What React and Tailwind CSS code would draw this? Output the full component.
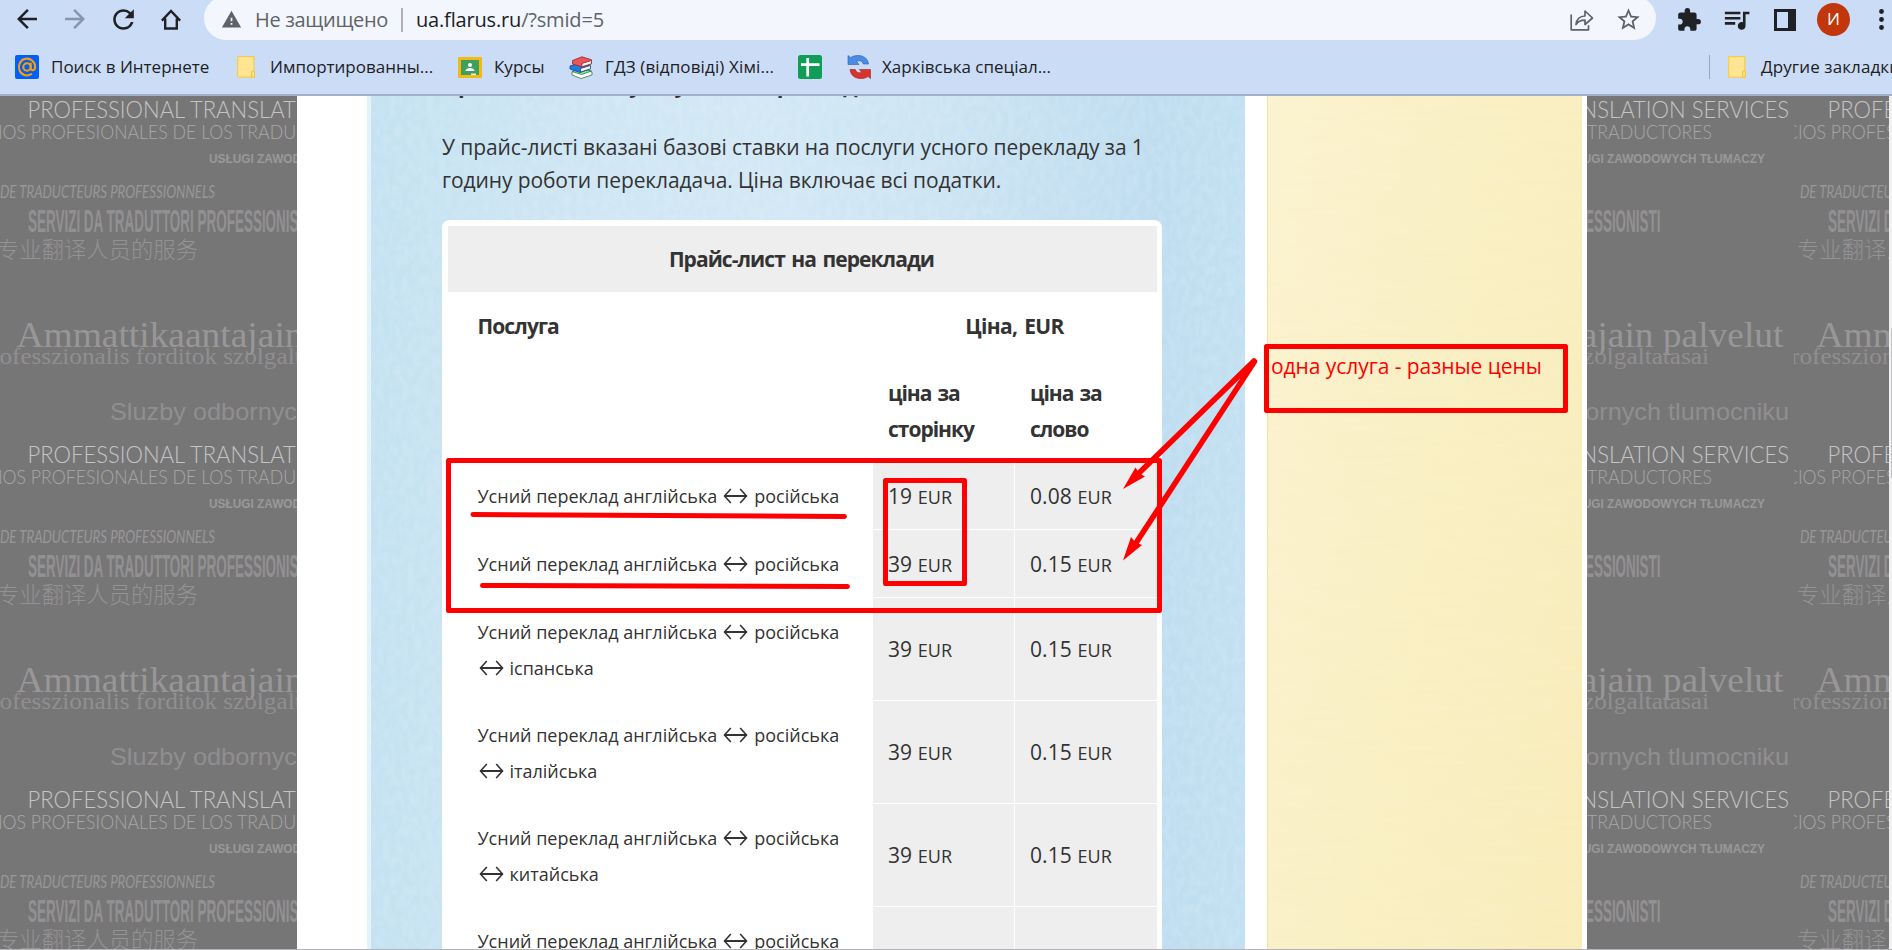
import React from 'react';
import { MdArrowBack, MdArrowForward, MdRefresh, MdWarning, MdStarBorder, MdExtension, MdQueueMusic } from 'react-icons/md';

const wallpaperLines = [
  { t: 'PROFESSIONAL TRANSLATION SERVICES', x: 27.5, w: 411.5, y: 118.3, s: 22.5, c: '#c6c3c6', f: 'Lato', b: 300 },
  { t: 'CIOS PROFESIONALES DE LOS TRADUCTORES', x: -14, w: 376, y: 139, s: 20.5, c: '#a9a6a9', f: 'Lato', b: 300 },
  { t: 'USŁUGI ZAWODOWYCH TŁUMACZY', x: 209, w: 206, y: 163.3, s: 13, c: '#9b989b', f: 'Liberation Sans', b: 700 },
  { t: 'DE TRADUCTEURS PROFESSIONNELS', x: 0, w: 215, y: 197.7, s: 17, c: '#9a979a', f: 'Lato', i: 'italic' },
  { t: 'SERVIZI DA TRADUTTORI PROFESSIONISTI', x: 28, w: 282.5, y: 232, s: 32, c: '#939093', f: 'Liberation Sans', b: 700 },
  { t: '专业翻译人员的服务', x: -3, w: 201, y: 258, s: 22.3, c: '#959295', f: 'Noto Sans CJK SC', b: 300 },
  { t: 'Ammattikaantajain palvelut', x: 16.5, w: 417, y: 346.5, s: 36, c: '#999699', f: 'Liberation Serif' },
  { t: 'rofesszionalis forditok szolgaltatasai', x: -9, w: 368, y: 364, s: 23, c: '#918e91', f: 'Liberation Serif' },
  { t: 'Sluzby odbornych tlumocniku', x: 110, w: 329, y: 420, s: 24.5, c: '#918e91', f: 'Liberation Sans' },
];

function Wallpaper({ x, width }) {
  const tiles = [];
  for (let r = 0; r < 3; r++) for (let k = 0; k < 5; k++) tiles.push([k * 450 - 6, 96 + r * 345]);
  return (
    <svg className="block h-full shrink-0 bg-[#767676]" width={width} height={853} viewBox={`${x} 96 ${width} 853`}>
      {tiles.filter(([tx]) => tx < x + width && tx + 450 > x).map(([tx, ty]) => (
        <svg key={`${tx}-${ty}`} x={tx} y={ty} width="450" height="345" viewBox="-6 96 450 345" overflow="hidden">
          {wallpaperLines.map((l) => (
            <text key={l.t} x={l.x} y={l.y} textLength={l.w} lengthAdjust="spacingAndGlyphs" fontSize={l.s}
              fill={l.c} fontFamily={`"${l.f}", sans-serif`} fontWeight={l.b || 400} fontStyle={l.i || 'normal'}>{l.t}</text>
          ))}
        </svg>
      ))}
    </svg>
  );
}

const Texture = ({ id, freq, color, opacity }) => (
  <svg className="absolute inset-0 h-full w-full" aria-hidden="true">
    <filter id={id} x="0" y="0" width="100%" height="100%">
      <feTurbulence type="fractalNoise" baseFrequency={freq} numOctaves="2" seed="4" />
      <feColorMatrix values={color} />
    </filter>
    <rect width="100%" height="100%" filter={`url(#${id})`} opacity={opacity} />
  </svg>
);

const Folder = () => (
  <svg width="18" height="22" viewBox="0 0 18 22">
    <path d="M.7.7h16.2v14.5c.9.4.9 1.2.9 2v4H.7z" fill="#ffe591" stroke="#f2cd55" strokeWidth="1.2" />
    <path d="M14.5 21v-5c0-1.6 3-1.6 3 0v5z" fill="#ffe07f" stroke="#efc63f" />
  </svg>
);

const AtIcon = () => (
  <svg width="24" height="24" viewBox="0 0 24 24">
    <rect width="24" height="24" rx="2" fill="#005ff9" />
    <g fill="none" stroke="#ff9e00" strokeWidth="2.1" strokeLinecap="round">
      <circle cx="12" cy="12" r="3.7" />
      <path d="M15.7 8.6v4.2c0 3.6 4.4 3.2 4.4-.8A8.1 8.4 0 1 0 16.300 19.200" />
    </g>
  </svg>
);

const ClassroomIcon = () => (
  <svg width="24" height="21" viewBox="0 0 24 21">
    <rect width="24" height="21" rx="1" fill="#f4b915" />
    <rect x="3" y="3" width="18" height="15" fill="#3f9f5c" />
    <circle cx="12" cy="8" r="2" fill="#fff" />
    <path d="M7.500 14c0-2 2.500-3 4.500-3s4.500 1 4.500 3z" fill="#fff" />
    <rect x="13" y="16.500" width="5" height="1.600" fill="#eee" />
  </svg>
);

const BooksIcon = () => (
  <svg width="24" height="23" viewBox="0 0 24 23" strokeLinejoin="round" strokeWidth=".8">
    <path d="M3 16l9-3 11 3v3l-11 3.500L3 19z" fill="#fff" stroke="#2b7a3a" />
    <path d="M3 15.500l9-3 10.500 2.500L12.500 18.500z" fill="#8fe58b" stroke="#2b7a3a" />
    <path d="M1 10l9-3 11 3v3l-10 3.500L1 13z" fill="#1e7be0" stroke="#14488f" />
    <path d="M11.500 12.500l10-3v3.300l-10 3.200z" fill="#fff" stroke="#14488f" />
    <path d="M3.500 4.500L13 .8l9.500 3v4L13 11 3.500 8z" fill="#e8555a" stroke="#9b2226" />
    <path d="M13 7.500l9.500-3v3.200L13 10.800z" fill="#fff" stroke="#9b2226" />
  </svg>
);

const SheetIcon = () => (
  <svg width="24" height="24" viewBox="0 0 24 24">
    <rect width="24" height="24" rx="2.500" fill="#109d58" />
    <path d="M9.700 3v18.500M3 9.700h18.500" stroke="#fff" strokeWidth="2.700" />
  </svg>
);

const SyncIcon = () => (
  <svg width="24" height="24" viewBox="0 0 24 24">
    <path d="M1 .5l2.500 2C8-.8 20.500-1 21.500 9h-5.300c-.7-2.800-3.500-4-6.700-2.700L12 9.500H1z" fill="#4a8be6" stroke="#2a5fb8" strokeWidth=".6" />
    <path d="M23.500 23.500l-2.500-2C16.500 25 4 24.800 3 14.500h5.300c.7 2.800 3.500 4 6.200 2.700L12.500 14.500h11z" fill="#d8342c" stroke="#a51f1a" strokeWidth=".6" />
  </svg>
);

const HomeIcon = () => (
  <svg width="20" height="21" viewBox="0 0 20 21" fill="none" stroke="#202124" strokeWidth="2.400">
    <path d="M.9 11.600L10 2l9.100 9.600M4.200 9.500v10h11.600v-10" />
  </svg>
);

const ShareIcon = () => (
  <svg width="24" height="22" viewBox="0 0 24 22" fill="none" stroke="#5f6368" strokeWidth="1.700" strokeLinejoin="round">
    <path d="M1.200 5.500v15.300h17.300v-4.500" />
    <path d="M6 15.500c.6-5.500 3.800-8.300 9-8.500V2l7.500 7-7.500 6.500v-4.300c-4-.1-6.800 1-9 4.300z" />
  </svg>
);

const Bookmark = ({ icon, children, className }) => (
  <div className={`flex h-6 shrink-0 items-center whitespace-nowrap text-[17px] text-[#202124] ${className}`}>
    {icon}
    {children && <span>{children}</span>}
  </div>
);

function BrowserChrome() {
  return (
    <header className="h-24 border-b-2 border-[#a1b1ca] bg-[#cbdcf6] font-['Open_Sans',sans-serif]">
      <div className="flex h-10 items-start">
        <div className="flex h-[38px] w-[204px] shrink-0 items-center pl-3 text-[#202124]">
          <MdArrowBack size={30} />
          <MdArrowForward size={30} className="ml-[18px] text-[#8794aa]" />
          <MdRefresh size={31} className="ml-[18px]" />
          <span className="ml-[22px]"><HomeIcon /></span>
        </div>
        <div className="-mt-1 flex h-11 w-[1452px] items-center rounded-[22px] bg-[#f3f7fd] pt-[3px] text-xl text-[#5f6368]">
          <MdWarning size={21} className="ml-[17px]" />
          <span className="ml-[13px] tracking-[-0.32px]">Не защищено</span>
          <span className="ml-[13px] h-6 w-0.5 bg-[#aeb2b8]" />
          <span className="ml-[13px] tracking-[-0.17px]"><span className="text-[#202124]">ua.flarus.ru</span>/?smid=5</span>
          <span className="ml-auto"><ShareIcon /></span>
          <MdStarBorder size={27} className="mr-3.5 ml-[21px]" />
        </div>
        <div className="flex h-[39px] grow items-center overflow-hidden text-[#202124]">
          <MdExtension size={26} className="ml-5 shrink-0" />
          <MdQueueMusic size={31} className="ml-[19px] shrink-0" />
          <svg className="ml-[22px] shrink-0" width="22" height="22" viewBox="0 0 22 22"><path fillRule="evenodd" d="M0 0h22v22H0zM3 3v16h11V3z" fill="#202124" /></svg>
          <span className="ml-[21px] flex size-[33px] shrink-0 items-center justify-center rounded-full bg-[#c1360b] pb-px text-[17px] text-white">И</span>
          <svg className="ml-[29px] shrink-0" width="5" height="21" viewBox="0 0 5 21" fill="#202124"><circle cx="2.500" cy="2.500" r="2.400" /><circle cx="2.500" cy="10.500" r="2.400" /><circle cx="2.500" cy="18.500" r="2.400" /></svg>
        </div>
      </div>
      <nav className="flex items-center overflow-hidden pt-[15px] pl-[15px]">
        <Bookmark icon={<AtIcon />} className="w-[222px] gap-3">Поиск в Интернете</Bookmark>
        <Bookmark icon={<Folder />} className="w-[221px] gap-[15px]">Импортированны...</Bookmark>
        <Bookmark icon={<ClassroomIcon />} className="w-[111px] gap-3">Курсы</Bookmark>
        <Bookmark icon={<BooksIcon />} className="w-[229px] gap-3"><span className="tracking-[0.13px]">ГДЗ (відповіді) Хімі...</span></Bookmark>
        <Bookmark icon={<SheetIcon />} className="w-[49px]" />
        <Bookmark icon={<SyncIcon />} className="w-[862px] gap-[11px]">Харківська спеціал...</Bookmark>
        <span className="h-6 w-px shrink-0 bg-[#97a7c0]" />
        <Bookmark icon={<Folder />} className="ml-[18px] gap-[15px]"><span className="tracking-[0.1px]">Другие закладки</span></Bookmark>
      </nav>
    </header>
  );
}

const Both = ({ className }) => (
  <svg className={`inline-block align-[-1px] ${className}`} width="25" height="16" viewBox="0 0 25 16" fill="none" stroke="#333" strokeWidth="2">
    <path d="M1.500 8h22" />
    <path d="M7.800 1L1.500 8l6.300 7M17.200 1l6.300 7-6.300 7" strokeWidth="1.600" />
  </svg>
);

const rows = [
  { page: '19', word: '0.08', h: 'h-[68px]' },
  { page: '39', word: '0.15', h: 'h-[68px]' },
  { extra: 'іспанська', page: '39', word: '0.15', h: 'h-[103px]' },
  { extra: 'італійська', page: '39', word: '0.15', h: 'h-[103px]' },
  { extra: 'китайська', page: '39', word: '0.15', h: 'h-[103px]' },
  { extra: 'німецька', page: '', word: '', h: 'h-[103px]' },
];

const Price = ({ value }) => (
  <div className="flex items-center border-b border-white bg-[#eee] pt-px pl-[15px]">
    {value && <span className="text-[21px] tracking-[0.08px]">{value} <span className="text-[18px]">EUR</span></span>}
  </div>
);

function PriceTable() {
  return (
    <section className="mt-[23px] w-[720px] rounded-t-lg bg-white pt-1.5 pr-[5px] pl-1.5 leading-9">
      <h2 className="flex h-[66px] items-center justify-center bg-[#eee] pr-0.5 pb-px text-[21px] font-bold tracking-[-0.95px] [word-spacing:2px]">Прайс-лист на переклади</h2>
      <div className="grid h-[68px] grid-cols-[424px_285px] items-center text-[21px] font-bold">
        <span className="pl-[29.5px] tracking-[-0.9px]">Послуга</span>
        <span className="text-center tracking-[-0.65px] [word-spacing:2px]">Ціна, EUR</span>
      </div>
      <div className="grid h-[102px] grid-cols-[424px_142px_142px] pt-[15px] text-[21px] font-bold tracking-[-1px] [word-spacing:1.5px]">
        <span />
        <span className="pl-4">ціна за<br />сторінку</span>
        <span className="pl-4">ціна за<br />слово</span>
      </div>
      {rows.map((r, i) => (
        <div key={i} className={`grid grid-cols-[424px_141px_142px] gap-x-px ${r.h}`}>
          <div className="pt-4 pl-[29.5px] text-[18px] whitespace-nowrap">
            Усний переклад англійська<Both className="mr-1.5 ml-1.5" />російська
            {r.extra && <div><Both className="mr-1.5 ml-px" />{r.extra}</div>}
          </div>
          <Price value={r.page} />
          <Price value={r.word} />
        </div>
      ))}
    </section>
  );
}

const Annotations = () => (
  <svg className="pointer-events-none absolute top-0 left-0" width="1892" height="950" viewBox="0 0 1892 950" fill="none" stroke="#f00" strokeWidth="5" strokeLinejoin="round" strokeLinecap="round">
    <rect x="448.500" y="460.500" width="711" height="150" />
    <rect x="885.500" y="480.500" width="79" height="103" />
    <rect x="1266.500" y="346.500" width="299" height="64" />
    <path d="M473 514.500L844.500 516.500M482.500 585.500L847.500 586.500" />
    <path d="M1254 361L1138 474M1254.500 361.500L1136 543" strokeWidth="5.500" />
    <path d="M1123 489l12.500-21.500 3.500 5.500 6 3.500zM1123 560.500l8-23.500 4.500 5.500 6.500 2.500z" fill="#f00" stroke="none" />
  </svg>
);

export default function App() {
  return (
    <div className="relative h-[950px] w-[1892px] overflow-hidden bg-white font-['Open_Sans',sans-serif] text-[#333]">
      <BrowserChrome />
      <div className="flex h-[853px] overflow-hidden">
        <Wallpaper x={0} width={297} />
        <main className="relative ml-[70px] h-full w-[878px] shrink-0 overflow-hidden border-l-4 border-[#e4f3f9] bg-[linear-gradient(90deg,#c4e2f1_0%,#cfe6f4_25%,#d2e8f5_45%,#cce4f3_65%,#bfddf0_90%,#c2e0f1_100%)]">
          <Texture id="paper-blue" freq="0.16 0.1" color="0 0 0 0 1  0 0 0 0 1  0 0 0 0 1  1.4 0 0 0 -0.45" opacity="0.18" />
          <div className="relative ml-[71px] w-[720px] text-[21px] leading-[33px] whitespace-nowrap">
            <h1 className="-mt-[28px] text-[22px] font-bold tracking-[-0.35px] [word-spacing:2px]">Прайс-лист послуги усний переклад</h1>
            <p className="mt-[30px]">
              <span className="block tracking-[-0.08px]">У прайс-листі вказані базові ставки на послуги усного перекладу за 1</span>
              <span className="block tracking-[-0.1px]">годину роботи перекладача. Ціна включає всі податки.</span>
            </p>
            <PriceTable />
          </div>
        </main>
        <aside className="relative ml-[22px] h-full w-[315px] shrink-0 border-l border-[#f3e39d] bg-[linear-gradient(100deg,#fbf2cf_0%,#f9efc3_50%,#f8ecb8_100%)]">
          <Texture id="paper-yellow" freq="0.02 0.2" color="0 0 0 0 1  0 0 0 0 1  0 0 0 0 0.95  1.4 0 0 0 -0.5" opacity="0.12" />
          <p className="relative mt-[254px] ml-[3px] text-[21px] leading-8 tracking-[-0.06px] whitespace-nowrap text-[#f00]">одна услуга - разные цены</p>
        </aside>
        <div className="ml-[5px] flex shrink-0"><Wallpaper x={1587} width={302} /></div>
        <div className="h-full grow bg-[#f1f1f1] pt-[232px] pl-0.5"><div className="h-[150px] bg-[#c4c4c6]" /></div>
      </div>
      <div className="h-px bg-[#b4b3b8]" />
      <Annotations />
    </div>
  );
}
